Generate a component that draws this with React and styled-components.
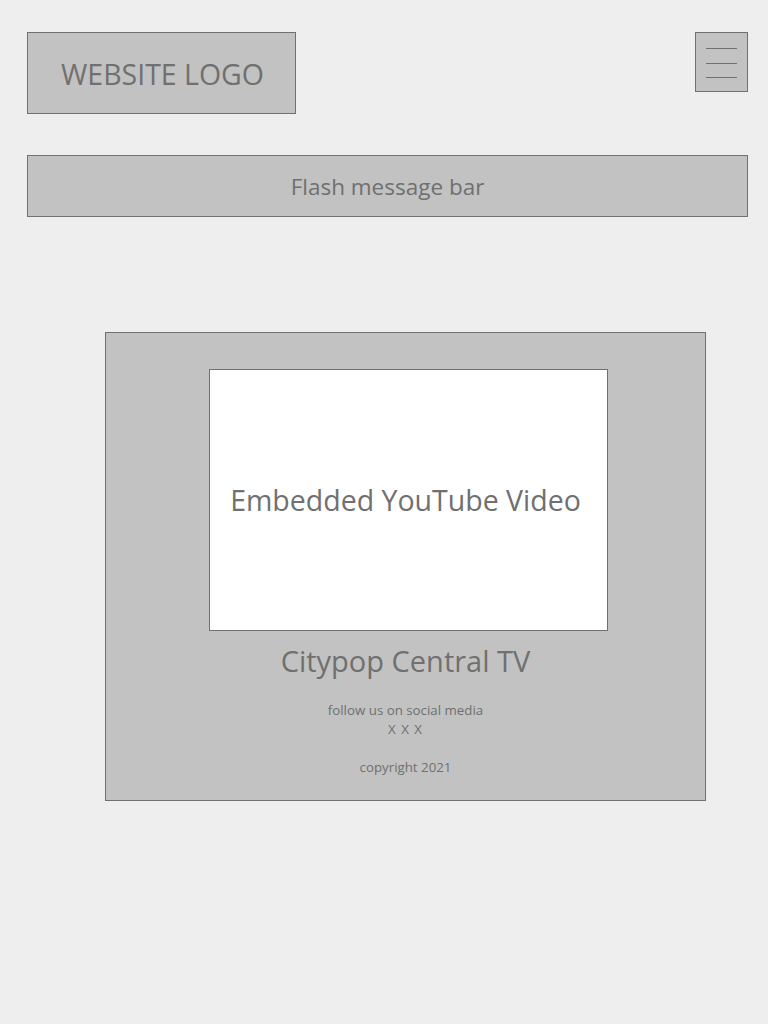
import React from "react";
import styled, { createGlobalStyle } from "styled-components";

const Global = createGlobalStyle`
  html, body { margin: 0; padding: 0; background: #eeeeee; }
  body { font-family: "Open Sans", "Noto Sans", sans-serif; color: #707070; }
  * { box-sizing: border-box; }
`;

const Page = styled.div`
  width: 768px;
  min-height: 1024px;
  padding: 32px 20px 0 27px;
  display: flex;
  flex-direction: column;
`;

const Header = styled.header`
  display: flex;
  justify-content: space-between;
  align-items: flex-start;
`;

const Box = styled.div`
  background: #c2c2c2;
  border: 1px solid #707070;
`;

const Logo = styled(Box)`
  width: 269px;
  height: 82px;
  display: flex;
  align-items: center;
  justify-content: center;
  font-size: 28.5px;
  padding: 1px 0 0 2px;
`;

const Burger = styled(Box)`
  width: 53px;
  height: 60px;
  display: flex;
  flex-direction: column;
  align-items: center;
  padding-top: 15px;
  gap: 13.5px;
`;

const BurgerLine = styled.span`
  display: block;
  width: 31px;
  height: 1px;
  background: #707070;
`;

const Flash = styled(Box)`
  margin-top: 41px;
  height: 62px;
  display: flex;
  align-items: center;
  justify-content: center;
  font-size: 22.5px;
`;

const Panel = styled(Box)`
  margin-top: 115px;
  margin-left: 78px;
  width: 601px;
  height: 469px;
  padding: 36px 0 0 103px;
  display: flex;
  flex-direction: column;
`;

const Video = styled.div`
  width: 399px;
  height: 262px;
  background: #ffffff;
  border: 1px solid #707070;
  display: flex;
  align-items: center;
  justify-content: center;
  font-size: 28.5px;
  padding-right: 6px;
`;

const Footer = styled.div`
  width: 399px;
  display: flex;
  flex-direction: column;
  align-items: center;
  margin-left: -3px;
`;

const Title = styled.div`
  margin-top: 11px;
  font-size: 29px;
  line-height: 38px;
`;

const Small = styled.div`
  font-size: 13.3px;
  line-height: 19px;
  margin-top: ${(p) => p.$mt || 0}px;
  letter-spacing: ${(p) => p.$spread || 0}px;
`;

export default function App() {
  return (
    <>
      <Global />
      <Page>
        <Header>
          <Logo>WEBSITE LOGO</Logo>
          <Burger>
            <BurgerLine />
            <BurgerLine />
            <BurgerLine />
          </Burger>
        </Header>
        <Flash>Flash message bar</Flash>
        <Panel>
          <Video>Embedded YouTube Video</Video>
          <Footer>
            <Title>Citypop Central TV</Title>
            <Small $mt={21}>follow us on social media</Small>
            <Small $spread={1}>X X X</Small>
            <Small $mt={19}>copyright 2021</Small>
          </Footer>
        </Panel>
      </Page>
    </>
  );
}
